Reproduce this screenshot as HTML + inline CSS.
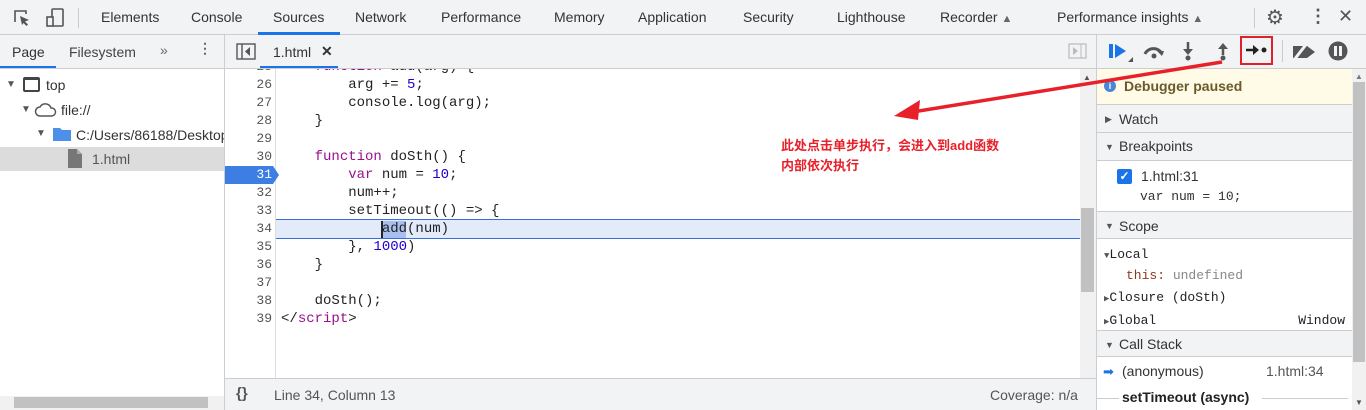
<!DOCTYPE html>
<html><head><meta charset="utf-8"><style>
*{box-sizing:border-box;margin:0;padding:0}
body{width:1366px;height:410px;overflow:hidden;background:#fff;font-family:"Liberation Sans",sans-serif;font-size:14px;color:#333;position:relative}
.abs{position:absolute}
.mono{font-family:"Liberation Mono",monospace;font-size:13px}
.tb{top:0;left:0;width:1366px;height:35px;background:#f1f3f4;border-bottom:1px solid #cbcdd1}
.tab{position:absolute;top:9px;color:#333;font-size:14px}
.bar2{top:35px;height:34px;background:#f1f3f4;border-bottom:1px solid #cbcdd1}
.ln{position:absolute;left:225px;width:47px;text-align:right;color:#555;font-size:13px}
.code{position:absolute;left:281px;white-space:pre;color:#222;font-size:14px;line-height:18px}
.kw{color:#9a0f8a}.num{color:#1c00cf}
.sec{position:absolute;left:1097px;width:255px;background:#f1f3f4;border-bottom:1px solid #cbcdd1;font-size:14px;padding-left:22px}
.tri{position:absolute;left:8px;font-size:9px;color:#555}
</style></head><body>
<div class="abs tb"></div>
<svg class="abs" style="left:12px;top:8px" width="20" height="20" viewBox="0 0 20 20"><path d="M3 14V3h11v3" fill="none" stroke="#555" stroke-width="1.6"/><path d="M8 8l9 4-4 1.5 3 3-1.5 1.5-3-3L10 17z" fill="#555"/></svg>
<svg class="abs" style="left:44px;top:7px" width="22" height="22" viewBox="0 0 22 22"><rect x="8" y="2" width="11" height="17" rx="1" fill="none" stroke="#555" stroke-width="1.6"/><rect x="3" y="10" width="6" height="9" fill="#f1f3f4" stroke="#555" stroke-width="1.6"/></svg>
<div class="abs" style="left:78px;top:8px;width:1px;height:20px;background:#ccc"></div>
<div class="tab" style="left:101px">Elements</div>
<div class="tab" style="left:191px">Console</div>
<div class="tab" style="left:273px">Sources</div>
<div class="abs" style="left:258px;top:32px;width:82px;height:3px;background:#1a73e8"></div>
<div class="tab" style="left:355px">Network</div>
<div class="tab" style="left:441px">Performance</div>
<div class="tab" style="left:554px">Memory</div>
<div class="tab" style="left:638px">Application</div>
<div class="tab" style="left:743px">Security</div>
<div class="tab" style="left:837px">Lighthouse</div>
<div class="tab" style="left:940px">Recorder <span style="font-size:11px;color:#666">▲</span></div>
<div class="tab" style="left:1057px">Performance insights <span style="font-size:11px;color:#666">▲</span></div>
<div class="abs" style="left:1254px;top:8px;width:1px;height:20px;background:#ccc"></div>
<div class="abs" style="left:1266px;top:5px;font-size:20px;color:#555">⚙</div>
<div class="abs" style="left:1309px;top:6px;font-size:18px;color:#555;font-weight:bold">⋮</div>
<div class="abs" style="left:1338px;top:6px;font-size:18px;color:#555">✕</div>

<div class="abs bar2" style="left:0;width:1366px"></div>
<div class="abs" style="left:224px;top:35px;width:1px;height:375px;background:#cbcdd1"></div>
<div class="abs" style="left:1096px;top:35px;width:1px;height:375px;background:#cbcdd1"></div>
<div class="tab" style="left:12px;top:44px">Page</div>
<div class="abs" style="left:0;top:66px;width:56px;height:2px;background:#1a73e8"></div>
<div class="tab" style="left:69px;top:44px;color:#444">Filesystem</div>
<div class="tab" style="left:160px;top:42px;color:#666">»</div>
<div class="tab" style="left:198px;top:40px;color:#666;font-weight:bold">⋮</div>
<svg class="abs" style="left:236px;top:43px" width="20" height="17"><rect x="1" y="1" width="18" height="15" fill="none" stroke="#555" stroke-width="1.4"/><line x1="6" y1="1" x2="6" y2="16" stroke="#555" stroke-width="1.4"/><path d="M14 4v9l-5-4.5z" fill="#555"/></svg>
<div class="tab" style="left:273px;top:44px">1.html</div>
<div class="tab" style="left:321px;top:43px;font-weight:bold">✕</div>
<div class="abs" style="left:260px;top:66px;width:78px;height:2px;background:#1a73e8"></div>
<svg class="abs" style="left:1068px;top:43px" width="19" height="16"><rect x="1" y="1" width="17" height="14" fill="none" stroke="#bbb" stroke-width="1.2"/><line x1="13" y1="1" x2="13" y2="15" stroke="#bbb"/><path d="M5 4v8l5-4z" fill="#bbb"/></svg>

<!-- debugger toolbar -->
<svg class="abs" style="left:1107px;top:40px" width="28" height="24"><rect x="2" y="4" width="4" height="14" fill="#1a73e8"/><path d="M8 4l11 7-11 7z" fill="#1a73e8"/><path d="M21 22h5v-5z" fill="#555"/></svg>
<svg class="abs" style="left:1142px;top:42px" width="24" height="18"><path d="M3 12a9 8 0 0 1 17 0" fill="none" stroke="#555" stroke-width="3"/><path d="M15 9l7 0-2 5z" fill="#555"/><circle cx="12" cy="14" r="2.5" fill="#555"/></svg>
<svg class="abs" style="left:1180px;top:41px" width="16" height="20"><path d="M8 1v10" stroke="#555" stroke-width="2.5"/><path d="M3 8l5 6 5-6z" fill="#555"/><circle cx="8" cy="17" r="2.5" fill="#555"/></svg>
<svg class="abs" style="left:1215px;top:41px" width="16" height="20"><path d="M8 6v8" stroke="#555" stroke-width="2.5"/><path d="M3 8l5-6 5 6z" fill="#555"/><circle cx="8" cy="17" r="2.5" fill="#555"/></svg>
<div class="abs" style="left:1240px;top:36px;width:33px;height:29px;border:2px solid #e0202a"></div>
<svg class="abs" style="left:1245px;top:43px" width="24" height="14"><path d="M1 7h9" stroke="#222" stroke-width="2.5"/><path d="M8 2l6 5-6 5z" fill="#222"/><circle cx="19" cy="7" r="2.5" fill="#222"/></svg>
<div class="abs" style="left:1282px;top:40px;width:1px;height:22px;background:#ccc"></div>
<svg class="abs" style="left:1291px;top:42px" width="26" height="18"><path d="M2 4h14l8 6-8 6H2z" fill="#555"/><path d="M3 18L17 0" stroke="#f1f3f4" stroke-width="3"/></svg>
<svg class="abs" style="left:1328px;top:41px" width="20" height="20"><circle cx="10" cy="10" r="9.5" fill="#555"/><rect x="6" y="5" width="3" height="10" fill="#f1f3f4"/><rect x="11" y="5" width="3" height="10" fill="#f1f3f4"/></svg>

<!-- left tree -->
<div class="abs" style="left:0;top:147px;width:224px;height:24px;background:#dcdcdc"></div>
<div class="abs" style="left:6px;top:79px;font-size:10px;color:#555">▼</div>
<div class="abs" style="left:23px;top:77px;width:17px;height:15px;border:2px solid #444;border-top-width:3px;border-radius:2px"></div>
<div class="abs" style="left:46px;top:77px">top</div>
<div class="abs" style="left:21px;top:104px;font-size:10px;color:#555">▼</div>
<svg class="abs" style="left:34px;top:101px" width="24" height="17"><path d="M6 15a4.5 4.5 0 0 1 0-9 6 6 0 0 1 11 1 4 4 0 0 1 1 8z" fill="none" stroke="#555" stroke-width="1.5"/></svg>
<div class="abs" style="left:61px;top:102px">file://</div>
<div class="abs" style="left:36px;top:128px;font-size:10px;color:#555">▼</div>
<svg class="abs" style="left:52px;top:126px" width="20" height="16"><path d="M1 2h7l2 2h9v11H1z" fill="#4d90e8"/></svg>
<div class="abs" style="left:76px;top:127px;white-space:nowrap;width:148px;overflow:hidden">C:/Users/86188/Desktop</div>
<svg class="abs" style="left:68px;top:149px" width="14" height="19"><path d="M0 0h9l5 5v14H0z" fill="#777"/><path d="M9 0v5h5" fill="#aaa"/></svg>
<div class="abs" style="left:92px;top:151px;color:#555">1.html</div>
<div class="abs" style="left:0;top:396px;width:224px;height:14px;background:#f1f1f1"></div>
<div class="abs" style="left:14px;top:397px;width:194px;height:11px;background:#c1c1c1"></div>

<!-- editor -->
<div class="abs" style="left:0;top:69px;width:1080px;height:309px;overflow:hidden">
<div class="abs" style="left:0;top:-69px;width:1080px;height:378px">
<div class="abs" style="left:275px;top:69px;width:1px;height:309px;background:#ddd"></div>
<div class="abs" style="left:276px;top:219px;width:804px;height:20px;background:#e3eaf9;border-top:1px solid #3b6fd8;border-bottom:1px solid #3b6fd8"></div>
<div class="abs" style="left:381px;top:221px;width:25px;height:17px;background:#a8bff0;border-left:2px solid #222"></div>
<div class="abs" style="left:225px;top:166px;width:48px;height:18px;background:#3d7ee3"></div>
<div class="abs" style="left:273px;top:166px;width:0;height:0;border-top:9px solid transparent;border-bottom:9px solid transparent;border-left:6px solid #3d7ee3"></div>
<div class="mono">
<div class="ln" style="top:59px">25</div><div class="code" style="top:58px">    <span class="kw">function</span> add(arg) {</div>
<div class="ln" style="top:77px">26</div><div class="code" style="top:76px">        arg += <span class="num">5</span>;</div>
<div class="ln" style="top:95px">27</div><div class="code" style="top:94px">        console.log(arg);</div>
<div class="ln" style="top:113px">28</div><div class="code" style="top:112px">    }</div>
<div class="ln" style="top:131px">29</div>
<div class="ln" style="top:149px">30</div><div class="code" style="top:148px">    <span class="kw">function</span> doSth() {</div>
<div class="ln" style="top:167px;color:#fff">31</div><div class="code" style="top:166px">        <span class="kw">var</span> num = <span class="num">10</span>;</div>
<div class="ln" style="top:185px">32</div><div class="code" style="top:184px">        num++;</div>
<div class="ln" style="top:203px">33</div><div class="code" style="top:202px">        setTimeout(() => {</div>
<div class="ln" style="top:221px">34</div><div class="code" style="top:220px">            add(num)</div>
<div class="ln" style="top:239px">35</div><div class="code" style="top:238px">        }, <span class="num">1000</span>)</div>
<div class="ln" style="top:257px">36</div><div class="code" style="top:256px">    }</div>
<div class="ln" style="top:275px">37</div>
<div class="ln" style="top:293px">38</div><div class="code" style="top:292px">    doSth();</div>
<div class="ln" style="top:311px">39</div><div class="code" style="top:310px">&lt;/<span class="kw">script</span>&gt;</div>
</div>
</div>
</div>
<div class="abs" style="left:1080px;top:69px;width:16px;height:309px;background:#f1f1f1"></div>
<div class="abs" style="left:1081px;top:208px;width:13px;height:84px;background:#c1c1c1"></div>
<div class="abs" style="left:1083px;top:73px;font-size:8px;color:#555">▲</div>
<div class="abs" style="left:225px;top:378px;width:871px;height:32px;background:#f1f3f4;border-top:1px solid #cbcdd1"></div>
<div class="abs" style="left:236px;top:385px;font-weight:bold;color:#555;font-size:15px">{}</div>
<div class="abs" style="left:274px;top:387px;color:#555">Line 34, Column 13</div>
<div class="abs" style="left:990px;top:387px;color:#555">Coverage: n/a</div>
<div class="abs" style="left:781px;top:136px;color:#e8202a;font-weight:bold;font-size:13px;line-height:20px;font-family:'Liberation Sans','Noto Sans CJK SC',sans-serif">此处点击单步执行，会进入到add函数<br>内部依次执行</div>

<!-- right panel -->
<div class="abs" style="left:1097px;top:69px;width:255px;height:36px;background:#fffbe6;border-bottom:1px solid #cbcdd1"></div>
<div class="abs" style="left:1104px;top:80px;width:12px;height:12px;border-radius:50%;background:#4a86d8;color:#fff;font-size:9px;text-align:center;line-height:12px;font-weight:bold">i</div>
<div class="abs" style="left:1124px;top:78px;font-weight:bold;color:#6b5a2a">Debugger paused</div>
<div class="sec" style="top:105px;height:28px;padding-top:6px"><span class="tri" style="top:9px">▶</span>Watch</div>
<div class="sec" style="top:133px;height:28px;padding-top:5px"><span class="tri" style="top:9px">▼</span>Breakpoints</div>
<div class="abs" style="left:1117px;top:169px;width:15px;height:15px;background:#1a73e8;border-radius:2px;color:#fff;font-size:12px;line-height:15px;text-align:center;font-weight:bold">✓</div>
<div class="abs" style="left:1141px;top:168px">1.html:31</div>
<div class="abs mono" style="left:1140px;top:189px">var num = 10;</div>
<div class="sec" style="top:211px;height:28px;padding-top:6px;border-top:1px solid #cbcdd1"><span class="tri" style="top:9px">▼</span>Scope</div>
<div class="abs mono" style="left:1104px;top:244px;line-height:22px;color:#222;width:245px">
<div><span style="font-size:9px;color:#555">▼</span>Local</div>
<div style="padding-left:22px;color:#8a3b1f;margin-top:-2px">this: <span style="color:#888">undefined</span></div>
<div><span style="font-size:9px;color:#555">▶</span>Closure (doSth)</div>
<div><span style="font-size:9px;color:#555">▶</span>Global<span style="float:right;margin-right:4px">Window</span></div>
</div>
<div class="sec" style="top:330px;height:27px;padding-top:5px;border-top:1px solid #cbcdd1"><span class="tri" style="top:9px">▼</span>Call Stack</div>
<div class="abs" style="left:1103px;top:364px;color:#1a73e8;font-size:13px">➡</div>
<div class="abs" style="left:1122px;top:363px">(anonymous)</div>
<div class="abs" style="left:1266px;top:363px;color:#555">1.html:34</div>
<div class="abs" style="left:1097px;top:398px;width:22px;height:1px;background:#ccc"></div>
<div class="abs" style="left:1122px;top:389px;font-weight:bold;color:#222">setTimeout (async)</div>
<div class="abs" style="left:1262px;top:398px;width:86px;height:1px;background:#ccc"></div>
<div class="abs" style="left:1352px;top:69px;width:14px;height:341px;background:#f1f1f1"></div>
<div class="abs" style="left:1353px;top:82px;width:12px;height:280px;background:#c1c1c1"></div>
<div class="abs" style="left:1355px;top:72px;font-size:8px;color:#777">▲</div>
<div class="abs" style="left:1355px;top:398px;font-size:8px;color:#555">▼</div>

<!-- annotation arrow on top -->
<svg class="abs" style="left:880px;top:55px" width="350" height="70"><line x1="342" y1="7" x2="20" y2="59" stroke="#e8202a" stroke-width="3.5"/><path d="M14 61l26-16-2 20z" fill="#e8202a"/></svg>
</body></html>
